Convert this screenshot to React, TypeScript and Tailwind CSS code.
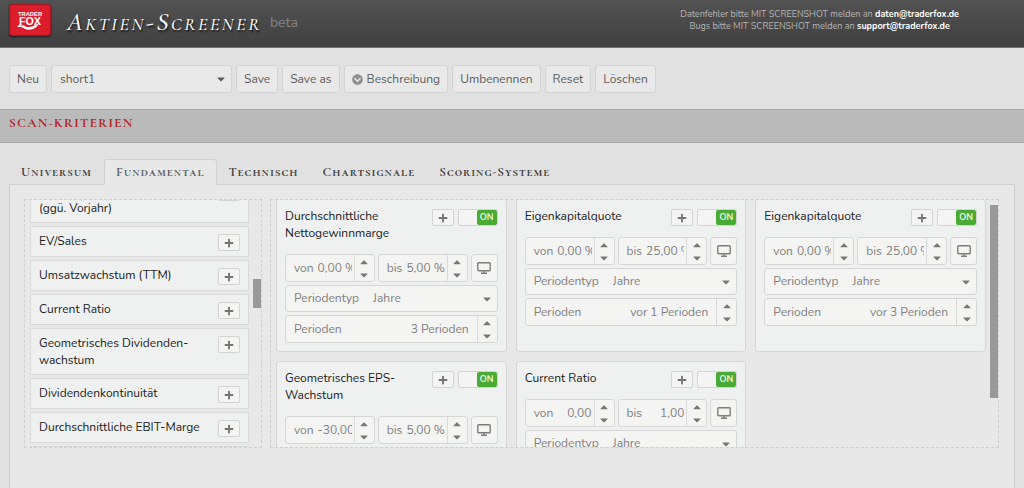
import { ReactNode, useEffect, useRef } from "react";
import {
  FaCaretDown,
  FaCaretUp,
  FaChevronCircleDown,
  FaPlus,
} from "react-icons/fa";

type Criterion = {
  id: string;
  title: string[];
  from: string;
  to: string;
  periods: string;
};

const library: string[][] = [
  ["Umsatzwachstum", "(ggü. Vorjahr)"],
  ["EV/Sales"],
  ["Umsatzwachstum (TTM)"],
  ["Current Ratio"],
  ["Geometrisches Dividenden-", "wachstum"],
  ["Dividendenkontinuität"],
  ["Durchschnittliche EBIT-Marge"],
  ["Eigenkapitalquote"],
];

const criteria: Criterion[] = [
  {
    id: "netto",
    title: ["Durchschnittliche", "Nettogewinnmarge"],
    from: "0,00 %",
    to: "5,00 %",
    periods: "3 Perioden",
  },
  {
    id: "ekq1",
    title: ["Eigenkapitalquote"],
    from: "0,00 %",
    to: "25,00 %",
    periods: "vor 1 Perioden",
  },
  {
    id: "ekq3",
    title: ["Eigenkapitalquote"],
    from: "0,00 %",
    to: "25,00 %",
    periods: "vor 3 Perioden",
  },
  {
    id: "eps",
    title: ["Geometrisches EPS-", "Wachstum"],
    from: "-30,00 %",
    to: "5,00 %",
    periods: "3 Perioden",
  },
  {
    id: "ratio",
    title: ["Current Ratio"],
    from: "0,00",
    to: "1,00",
    periods: "vor 1 Perioden",
  },
];

const tabs = [
  "Universum",
  "Fundamental",
  "Technisch",
  "Chartsignale",
  "Scoring-Systeme",
];

const Logo = () => (
  <svg
    viewBox="0 0 42 32"
    className="h-8 w-[42px] rounded-[3px] border border-[#a81420] bg-[#d81a2a] shadow-[0_1px_2px_rgba(0,0,0,0.6)]"
    role="img"
    aria-label="TraderFox"
  >
    <rect x="1" y="1" width="40" height="30" rx="2" fill="#dd1d2c" />
    <text
      x="21"
      y="11.5"
      textAnchor="middle"
      fill="#fff"
      fontFamily="Liberation Sans, sans-serif"
      fontWeight="bold"
      fontSize="6.200"
    >
      TRADER
    </text>
    <text
      x="21"
      y="21.5"
      textAnchor="middle"
      fill="#fff"
      fontFamily="Liberation Sans, sans-serif"
      fontWeight="bold"
      fontSize="11.500"
    >
      FOX
    </text>
    <path
      d="M7.500 23.500c1-2.400 3-3.400 5-3.200l-1.600 1.800 3.600-.6c2 3 9 3.200 16-2.200-2 5.600-7 7.500-11.500 7-3.500-.4-6-2.600-8-3.200-1 .1-2.500.2-3.500.4z"
      fill="#fff"
    />
  </svg>
);

const MonitorIcon = () => (
  <svg viewBox="0 0 14 12" className="h-3 w-3.5" fill="none" stroke="#7d7d7d">
    <rect x="0.800" y="0.800" width="12.400" height="8" rx="0.800" strokeWidth="1.400" />
    <path d="M7 9v2M4 11.200h6" strokeWidth="1.400" />
  </svg>
);

const ToolButton = ({ children }: { children: ReactNode }) => (
  <button className="flex h-7 items-center gap-1 rounded-[3px] border border-[#d3d3d3] bg-[#e9e9e9] px-[7px] text-[#5c5c5c]">
    {children}
  </button>
);

const AddButton = ({ name }: { name: string }) => (
  <button
    aria-label={`${name} hinzufügen`}
    className="mt-px flex h-[17px] w-[22px] shrink-0 items-center justify-center rounded-[2px] border border-[#d3d3d3] bg-[#f4f4f3] text-[#747474]"
  >
    <FaPlus size={10} />
  </button>
);

const Toggle = ({ name }: { name: string }) => (
  <label className="mt-px flex h-[17px] w-10 shrink-0 overflow-hidden rounded-[2px] border border-[#d3d3d3] bg-[#f4f4f3]">
    <input
      type="checkbox"
      role="switch"
      defaultChecked
      aria-label={`${name} aktiv`}
      className="sr-only"
    />
    <span className="ml-auto w-5 rounded-[2px] bg-[#4aab34] text-center text-[9px] leading-[15px] font-semibold text-white">
      ON
    </span>
  </label>
);

const Spinner = ({ name }: { name: string }) => (
  <div className="flex w-5 shrink-0 flex-col border-l border-[#d9d9d9] text-[#777]">
    <button
      aria-label={`${name} erhöhen`}
      className="flex flex-1 items-center justify-center"
    >
      <FaCaretUp size={12} />
    </button>
    <button
      aria-label={`${name} verringern`}
      className="flex flex-1 items-center justify-center"
    >
      <FaCaretDown size={12} />
    </button>
  </div>
);

const NumberField = ({
  id,
  label,
  value,
}: {
  id: string;
  label: string;
  value: string;
}) => (
  <div className="flex h-7 min-w-0 flex-1 rounded-[3px] border border-[#d6d6d6] bg-[#f4f4f3] pl-2">
    <label htmlFor={id} className="mr-1 self-center">
      {label}
    </label>
    <input
      id={id}
      defaultValue={value}
      className="mr-0.5 w-0 min-w-0 flex-1 text-right outline-none"
    />
    <Spinner name={label} />
  </div>
);

const CriterionCard = ({ item }: { item: Criterion }) => {
  const name = item.title.join(" ");
  return (
    <article className="rounded-[3px] border border-[#d6d6d6] bg-[#eff1f1] p-2">
      <div className="mb-3 flex items-start">
        <h3 className="flex-1 leading-[17px] whitespace-nowrap text-[#222]">
          {item.title.map((line) => (
            <span key={line} className="block">
              {line}
            </span>
          ))}
        </h3>
        <div className="flex h-[17px] gap-1">
          <AddButton name={name} />
          <Toggle name={name} />
        </div>
      </div>
      <div className="flex flex-col gap-[3px] text-[#808080]">
        <div className="flex gap-[3px]">
          <NumberField id={`${item.id}-from`} label="von" value={item.from} />
          <NumberField id={`${item.id}-to`} label="bis" value={item.to} />
          <button
            aria-label="Anzeigen"
            className="flex w-[27px] items-center justify-center rounded-[3px] border border-[#d6d6d6] bg-[#f4f4f3]"
          >
            <MonitorIcon />
          </button>
        </div>
        <div className="flex h-[27px] items-center rounded-[3px] border border-[#d6d6d6] bg-[#f4f4f3] pr-1 pl-2">
          <label htmlFor={`${item.id}-type`} className="mr-3.5">
            Periodentyp
          </label>
          <select
            id={`${item.id}-type`}
            className="min-w-0 flex-1 appearance-none outline-none"
          >
            <option>Jahre</option>
          </select>
          <FaCaretDown size={12} className="text-[#777]" />
        </div>
        <div className="flex h-7 rounded-[3px] border border-[#d6d6d6] bg-[#f4f4f3] pl-2">
          <label htmlFor={`${item.id}-periods`} className="self-center">
            Perioden
          </label>
          <input
            id={`${item.id}-periods`}
            defaultValue={item.periods}
            className="mr-2 min-w-0 flex-1 text-right outline-none"
          />
          <Spinner name="Perioden" />
        </div>
      </div>
    </article>
  );
};

export default function App() {
  const listRef = useRef<HTMLDivElement>(null);
  const gridRef = useRef<HTMLDivElement>(null);

  useEffect(() => {
    if (listRef.current) listRef.current.scrollTop = 24;
    if (gridRef.current) gridRef.current.scrollTop = 1;
  }, []);

  return (
    <div className="flex min-h-screen flex-col bg-[#e1e1e1] font-['Nunito','Lato',sans-serif] text-[12px] leading-[17px]">
      <header className="flex h-12 items-start border-b border-[#d8435a] bg-linear-to-b from-[#525252] to-[#404040] px-[9px] pt-1">
        <Logo />
        <h1 className="ml-4 font-['Cormorant_Garamond','EB_Garamond','Liberation_Serif',serif] text-[26px] leading-9 font-medium tracking-widest text-white italic [font-variant-caps:small-caps] [text-shadow:1px_2px_2px_#111]">
          Aktien-Screener
        </h1>
        <span className="ml-2 pt-[7px] text-[14px] leading-6 text-[#858585]">
          beta
        </span>
        <p className="mr-14 ml-auto pt-1 text-center text-[9px] leading-3 text-[#b5b5b5]">
          Datenfehler bitte MIT SCREENSHOT melden an{" "}
          <a href="mailto:daten@traderfox.de" className="font-bold text-white">
            daten@traderfox.de
          </a>
          <br />
          Bugs bitte MIT SCREENSHOT melden an{" "}
          <a href="mailto:support@traderfox.de" className="font-bold text-white">
            support@traderfox.de
          </a>
        </p>
      </header>

      <div className="flex gap-1 px-[9px] pt-[17px] pb-4">
        <ToolButton>Neu</ToolButton>
        <div className="flex h-7 w-[181px] items-center rounded-[3px] border border-[#d3d3d3] bg-[#e9e9e9] pr-1 pl-2 text-[#5c5c5c]">
          <select
            aria-label="Screen"
            className="min-w-0 flex-1 appearance-none outline-none"
          >
            <option>short1</option>
          </select>
          <FaCaretDown size={12} />
        </div>
        <ToolButton>Save</ToolButton>
        <ToolButton>Save as</ToolButton>
        <ToolButton>
          <FaChevronCircleDown size={11} className="text-[#8e8e8e]" />
          Beschreibung
        </ToolButton>
        <ToolButton>Umbenennen</ToolButton>
        <ToolButton>Reset</ToolButton>
        <ToolButton>Löschen</ToolButton>
      </div>

      <h2 className="h-[34px] border-y border-[#a5a5a5] bg-[#bababa] px-[9px] pt-[5px] font-['Cormorant_Garamond','EB_Garamond','Liberation_Serif',serif] text-[13px] font-bold tracking-widest text-[#b3201f]">
        SCAN-KRITERIEN
      </h2>

      <main className="flex flex-1 flex-col px-[9px] pt-4">
        <div role="tablist" className="flex">
          {tabs.map((tab) => (
            <button
              key={tab}
              role="tab"
              aria-selected={tab === "Fundamental"}
              className={
                "h-[26px] rounded-t-[3px] border px-[11px] font-['Cormorant_Garamond','EB_Garamond','Liberation_Serif',serif] text-[13px] font-bold tracking-[1px] [font-variant-caps:small-caps] " +
                (tab === "Fundamental"
                  ? "border-[#d0d0d0] border-b-[#e8e8e8] bg-[#e8e8e8] text-[#5b636b]"
                  : "border-transparent border-b-[#d0d0d0] text-[#444]")
              }
            >
              {tab}
            </button>
          ))}
          <div className="flex-1 border-b border-[#d0d0d0]" />
        </div>

        <div className="flex flex-1 items-start gap-2 border-x border-[#d0d0d0] bg-[#e8e8e8] pt-[14px] pr-[15px] pb-10 pl-[14px]">
          <section className="flex h-[249px] w-[238px] shrink-0 border border-dashed border-[#cfcfcf]">
            <div ref={listRef} className="flex-1 overflow-hidden pl-[5px]">
              <ul className="flex flex-col gap-[3px]">
                {library.map((lines) => (
                  <li
                    key={lines[0]}
                    className="flex items-start border border-[#d9d9d9] bg-[#eff1f1] px-2 pt-1.5 pb-[5px] text-[#222]"
                  >
                    <span className="flex-1 whitespace-nowrap">
                      {lines.map((line) => (
                        <span key={line} className="block">
                          {line}
                        </span>
                      ))}
                    </span>
                    <AddButton name={lines.join(" ")} />
                  </li>
                ))}
              </ul>
            </div>
            <div className="ml-1 w-2 pt-[79px]">
              <div className="h-[29px] bg-[#999]" />
            </div>
          </section>

          <section className="flex h-[249px] min-w-0 flex-1 border border-dashed border-[#cfcfcf]">
            <div ref={gridRef} className="min-w-0 flex-1 overflow-hidden pl-[5px]">
              <div className="grid grid-cols-3 gap-[9px]">
                {criteria.map((item) => (
                  <CriterionCard key={item.id} item={item} />
                ))}
              </div>
            </div>
            <div className="ml-1 w-2 pt-[5px]">
              <div className="h-[193px] bg-[#999]" />
            </div>
          </section>
        </div>
      </main>
    </div>
  );
}
